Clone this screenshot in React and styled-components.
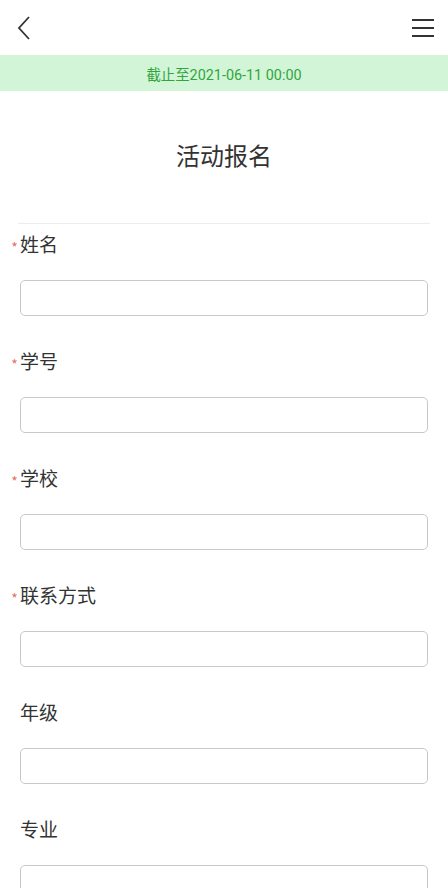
import React from "react"
import styled, { createGlobalStyle } from "styled-components"

const GlobalStyle = createGlobalStyle`
  body {
    margin: 0;
    background: #fff;
    font-family: Roboto, "Noto Sans CJK SC", sans-serif;
    color: #333;
  }
`

const Page = styled.div`
  width: 448px;
  height: 888px;
  overflow: hidden;
  background: #fff;
`

const TopBar = styled.header`
  height: 55px;
  display: flex;
  align-items: center;
  justify-content: space-between;
  padding: 0 13px 0 14px;
  box-sizing: border-box;
`

const IconButton = styled.button`
  border: 0;
  background: none;
  padding: 0;
  display: flex;
  color: #333;
`

const Banner = styled.div`
  height: 36px;
  background: #d2f5d7;
  color: #2fa63d;
  font-size: 14.4px;
  display: flex;
  align-items: center;
  justify-content: center;
`

const Title = styled.h1`
  margin: 48px 0 52px;
  font-size: 24px;
  line-height: 32px;
  font-weight: 400;
  text-align: center;
  color: #333;
  font-family: "Noto Sans CJK SC", sans-serif;
`

const Form = styled.form`
  margin: 0 18px;
  border-top: 1px solid #ececec;
  padding-top: 2px;
`

const Field = styled.div`
  padding: 0 2px 27px;
`

const Label = styled.label`
  display: flex;
  align-items: center;
  height: 34px;
  margin-bottom: 20px;
  font-size: 19px;
  font-family: "Noto Sans CJK SC", sans-serif;
  color: #333;
`

const Star = styled.span`
  width: 11px;
  margin-left: -11px;
  margin-top: 8px;
  color: #e2725f;
  font-size: 14px;
  line-height: 1;
  text-align: center;
`

const Input = styled.input`
  display: block;
  width: 100%;
  height: 36px;
  box-sizing: border-box;
  border: 1px solid #c8c8c8;
  border-radius: 5px;
  outline: none;
  background: #fff;
`

const fields = [
  { label: "姓名", required: true },
  { label: "学号", required: true },
  { label: "学校", required: true },
  { label: "联系方式", required: true },
  { label: "年级" },
  { label: "专业" },
]

export default function App() {
  return (
    <Page>
      <GlobalStyle />
      <TopBar>
        <IconButton aria-label="back">
          <svg width="20" height="26" viewBox="0 0 20 26" fill="none">
            <path d="M15 2 L5 13 L15 24" stroke="#333" strokeWidth="1.8" />
          </svg>
        </IconButton>
        <IconButton aria-label="menu">
          <svg width="24" height="20" viewBox="0 0 24 20" fill="none">
            <path d="M1 2 H23 M1 10 H23 M1 18 H23" stroke="#333" strokeWidth="1.8" />
          </svg>
        </IconButton>
      </TopBar>
      <Banner>截止至2021-06-11 00:00</Banner>
      <Title>活动报名</Title>
      <Form>
        {fields.map(f => (
          <Field key={f.label}>
            <Label>
              {f.required && <Star>*</Star>}
              {f.label}
            </Label>
            <Input type="text" />
          </Field>
        ))}
      </Form>
    </Page>
  )
}
